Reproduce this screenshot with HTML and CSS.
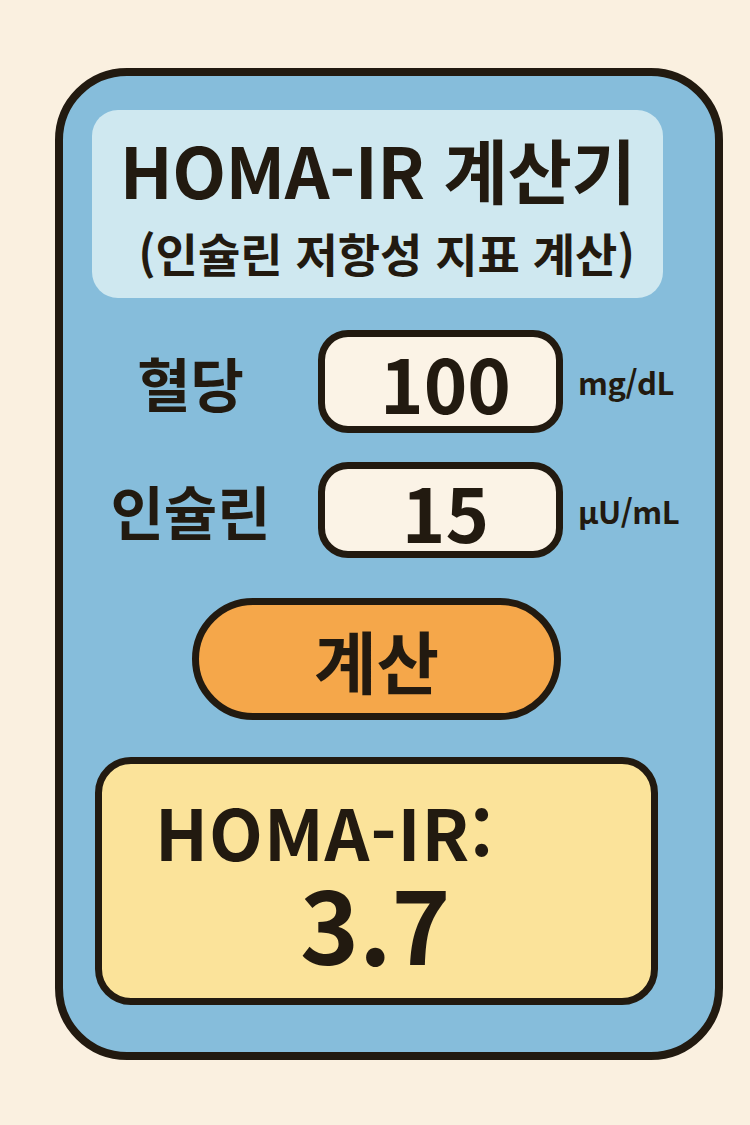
FILE: index.html
```html
<!DOCTYPE html>
<html lang="ko">
<head>
    <meta charset="UTF-8">
    <meta name="viewport" content="width=device-width, initial-scale=1.0">
    <title>HOMA-IR 계산기</title>
    <link rel="stylesheet" href="styles.css">
</head>
<body>
    <div class="card">
        <div class="heading">
            <h1>HOMA-IR 계산기</h1>
            <p>(인슐린 저항성 지표 계산)</p>
        </div>

        <div class="row">
            <label for="glucose">혈당</label>
            <input type="text" id="glucose" value="100">
            <span class="unit">mg/dL</span>
        </div>
        <div class="row second">
            <label for="insulin">인슐린</label>
            <input type="text" id="insulin" value="15">
            <span class="unit">µU/mL</span>
        </div>

        <button id="btn">계산</button>

        <div class="result">
            <h2>HOMA-IR:</h2>
            <p id="score">3.7</p>
        </div>
    </div>
</body>
</html>
```

FILE: styles.css
```css
*{
    padding: 0;
    margin: 0;
    box-sizing: border-box;
    font-family: "Noto Sans CJK KR", "Noto Sans", sans-serif;
    color: #221a10;
}
body{
    background: #faf0e0;
    width: 750px;
    height: 1125px;
}
.card{
    width: 668px;
    height: 992px;
    margin: 68px 0 0 55px;
    background: #86bddb;
    border: 8px solid #221a10;
    border-radius: 72px;
    display: flex;
    flex-direction: column;
}
.heading{
    margin: 34px 52px 0 29px;
    height: 188px;
    background: #cfe8f0;
    border-radius: 26px;
    display: flex;
    flex-direction: column;
    align-items: center;
}
.heading h1{
    font-size: 70px;
    font-weight: 700;
    margin-top: 8px;
    letter-spacing: -0.5px;
}
.heading p{
    font-size: 46px;
    font-weight: 700;
    padding-left: 18px;
}
.row{
    display: grid;
    grid-template-columns: 255px 245px auto;
    align-items: center;
    margin-top: 32px;
}
.row.second{
    margin-top: 29px;
}
.row label{
    text-align: center;
    font-size: 58px;
    font-weight: 700;
}
.row input{
    width: 245px;
    height: 103px;
    background: #fbf3e6;
    border: 7px solid #221a10;
    border-radius: 30px;
    text-align: center;
    padding-left: 10px;
    font-size: 74px;
    font-weight: 700;
    outline: none;
}
.row.second input{
    height: 96px;
}
.unit{
    padding-left: 15px;
    font-size: 31px;
    font-weight: 700;
    letter-spacing: -0.5px;
}
#btn{
    margin: 40px 0 0 129px;
    width: 369px;
    height: 122px;
    background: #f5a74a;
    border: 7px solid #221a10;
    border-radius: 61px;
    font-size: 68px;
    font-weight: 700;
}
.result{
    margin: 37px 0 0 32px;
    width: 563px;
    height: 248px;
    background: #fbe39a;
    border: 7px solid #221a10;
    border-radius: 36px;
    padding: 32px 0 0 53px;
}
.result h2{
    font-size: 70px;
    font-weight: 700;
    line-height: 1;
    letter-spacing: 1px;
}
.result p{
    font-size: 100px;
    font-weight: 700;
    line-height: 1;
    margin: 6px 0 0 145px;
}
```
